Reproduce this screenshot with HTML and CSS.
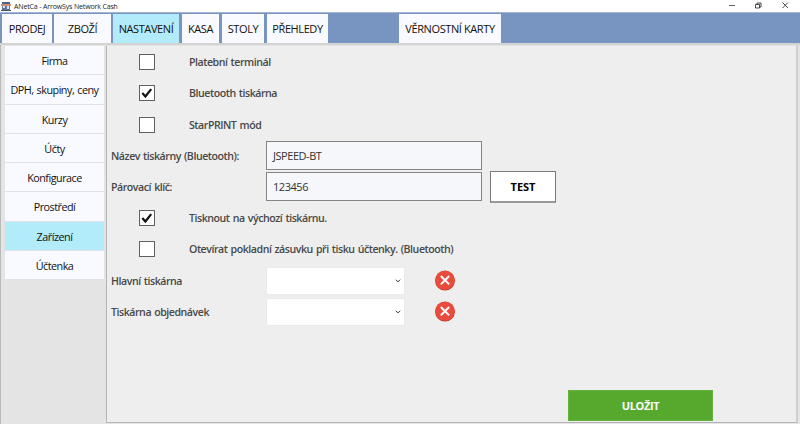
FILE: index.html
```html
<!DOCTYPE html>
<html lang="cs">
<head>
<meta charset="utf-8">
<title>ANetCa - ArrowSys Network Cash</title>
<link rel="stylesheet" href="styles.css">
</head>
<body>
<header class="titlebar">
  <svg class="app-icon" width="10" height="10" viewBox="0 0 10 10"><path fill="#4a6490" d="M1 1h8v2H1z"/><path fill="#d98a78" d="M0 3h10v2H0z"/><path fill="#5c7594" d="M1 5h8v4H1z"/><path fill="#d9e7f4" d="M2 5h2v2H2zM6 5h2v3H6z"/><path fill="#4a5262" d="M0 9h10v1H0z"/></svg>
  <span class="title">ANetCa - ArrowSys Network Cash</span>
  <svg class="window-controls" width="64" height="10" viewBox="0 0 64 10" fill="none" stroke="#333"><path stroke="#666" d="M2 4.500h6"/><path stroke-width=".9" d="M28.500 3.500h4v3.500h-4zM30 3.500v-1.500h4v4h-1.500"/><path stroke-width=".9" d="M55.500 1.500l5.500 5.500M61 1.500l-5.500 5.500"/></svg>
</header>
<nav class="tabs">
  <a class="tab prodej"><span>PRODEJ</span></a>
  <a class="tab zbozi"><span>ZBOŽÍ</span></a>
  <a class="tab nastaveni active"><span>NASTAVENÍ</span></a>
  <a class="tab kasa"><span>KASA</span></a>
  <a class="tab stoly"><span>STOLY</span></a>
  <a class="tab prehledy"><span>PŘEHLEDY</span></a>
  <a class="tab karty"><span>VĚRNOSTNÍ KARTY</span></a>
</nav>
<div class="workspace">
  <aside class="sidebar">
    <a class="item">Firma</a>
    <a class="item">DPH, skupiny, ceny</a>
    <a class="item">Kurzy</a>
    <a class="item">Účty</a>
    <a class="item">Konfigurace</a>
    <a class="item">Prostředí</a>
    <a class="item active">Zařízení</a>
    <a class="item">Účtenka</a>
  </aside>
  <main class="panel">
    <div class="row check"><span class="box"></span><span class="label">Platební terminál</span></div>
    <div class="row check"><span class="box"><svg width="15" height="14" viewBox="0 0 15 14"><path d="M2.500 7L5.800 10.700L12 2.900"/></svg></span><span class="label">Bluetooth tiskárna</span></div>
    <div class="row check"><span class="box"></span><span class="label">StarPRINT mód</span></div>
    <div class="row"><span class="label name">Název tiskárny (Bluetooth):</span><span class="field">JSPEED-BT</span></div>
    <div class="row"><span class="label name">Párovací klíč:</span><span class="field">123456</span><span class="test">TEST</span></div>
    <div class="row check"><span class="box"><svg width="15" height="14" viewBox="0 0 15 14"><path d="M2.500 7L5.800 10.700L12 2.900"/></svg></span><span class="label">Tisknout na výchozí tiskárnu.</span></div>
    <div class="row check"><span class="box"></span><span class="label">Otevírat pokladní zásuvku při tisku účtenky. (Bluetooth)</span></div>
    <div class="row"><span class="label name">Hlavní tiskárna</span><span class="select"><svg width="6" height="4" viewBox="0 0 6 4"><path d="M.8.7L3 2.900L5.200.7"/></svg></span><svg class="remove" width="20" height="21" viewBox="0 0 20 21"><circle cx="10" cy="10.700" r="9.900" fill="#c9392b"/><circle cx="10" cy="10.100" r="9.700" fill="#e94b3c"/><path d="M5.800 6l8.400 8.400M14.200 6l-8.400 8.400"/></svg></div>
    <div class="row"><span class="label name">Tiskárna objednávek</span><span class="select"><svg width="6" height="4" viewBox="0 0 6 4"><path d="M.8.7L3 2.900L5.200.7"/></svg></span><svg class="remove" width="20" height="21" viewBox="0 0 20 21"><circle cx="10" cy="10.700" r="9.900" fill="#c9392b"/><circle cx="10" cy="10.100" r="9.700" fill="#e94b3c"/><path d="M5.800 6l8.400 8.400M14.200 6l-8.400 8.400"/></svg></div>
    <div class="save">ULOŽIT</div>
  </main>
</div>
</body>
</html>
```
FILE: styles.css
```css
* { box-sizing: border-box; }
body {
  margin: 0;
  width: 800px;
  height: 424px;
  overflow: hidden;
  display: flex;
  flex-direction: column;
  background: #fff;
  font-family: "Open Sans", "Noto Sans", sans-serif;
  font-size: 11px;
  color: #111;
  white-space: nowrap;
}
.titlebar {
  height: 12px;
  display: flex;
  align-items: center;
  padding: 0 10px 0 1px;
}
.app-icon { flex: none; margin-right: 3px; }
.title { font-size: 7px; line-height: 11px; color: #222; letter-spacing: -.15px; }
.window-controls { margin-left: auto; margin-right: -1px; }
.tabs {
  flex: none;
  height: 31px;
  padding: 1px 0 0 2px;
  display: flex;
  background: #7894c0;
  border-top: 1px solid #a4b6d2;
}
.tab {
  flex: none;
  height: 29px;
  display: flex;
  align-items: center;
  justify-content: center;
  background: #f9faff;
  margin-right: 3px;
  letter-spacing: -.4px;
}
.tab.active, .item.active { background: #b2ebf9; }
.prodej { width: 50px; margin-right: 2px; }
.zbozi { width: 57px; margin-right: 2px; }
.nastaveni { width: 66px; }
.kasa { width: 37px; }
.stoly { width: 42px; }
.prehledy { width: 61px; margin-right: 71px; }
.karty { width: 102px; }
.workspace {
  flex: 1;
  display: flex;
  border-top: 2px solid #d3d3d3;
  background: #e4e4e4;
}
.sidebar {
  width: 106px;
  padding: 1px 2px 0 4px;
  border-left: 1px solid #b9b9b9;
}
.item {
  height: 29.25px;
  padding-top: 1px;
  display: flex;
  align-items: center;
  justify-content: center;
  background: #f9faff;
  border-bottom: 1px solid #e1e2e6;
  letter-spacing: -.5px;
  word-spacing: .7px;
  font-size: 10.8px;
}
.panel {
  width: 692px;
  height: 378px;
  display: flex;
  flex-direction: column;
  padding: .6px 0 0 4px;
  background: #eee;
  border: 1px solid #b5b5b5;
  border-top-color: #e4e4e4;
  border-right: 2px solid #cfcfcf;
}
.row {
  flex: none;
  height: 31.2px;
  display: flex;
  align-items: center;
}
.label { font-size: 10.6px; font-weight: 600; color: #484848; letter-spacing: -.46px; word-spacing: .8px; }
.check { padding-left: 28px; }
.box {
  width: 16px;
  height: 16px;
  margin-right: 34px;
  border: 1px solid #606060;
  background: #fff;
  display: flex;
}
.box path { fill: none; stroke: #111; stroke-width: 2.4; }
.name { width: 155px; }
.field {
  width: 216px;
  height: 29px;
  padding-left: 6px;
  border: 1px solid #858585;
  background: #f6f7fb;
  color: #333;
  line-height: 27px;
  letter-spacing: -.45px;
}
.test {
  width: 66px;
  height: 32px;
  margin-left: 8px;
  border: 1px solid #7b7b7b;
  border-bottom: 2px solid #999;
  background: #fff;
  color: #000;
  font-weight: 700;
  line-height: 30px;
  text-align: center;
}
.select {
  width: 139px;
  height: 28px;
  display: flex;
  align-items: center;
  justify-content: flex-end;
  padding-right: 3px;
  background: #fff;
  border: 1px solid #e6ebef;
}
.select path { fill: none; stroke: #333; stroke-width: 1; }
.remove { margin-left: 30px; }
.remove path { stroke: #fff; stroke-width: 2; }
.save {
  flex: none;
  width: 145px;
  height: 31px;
  margin: auto 0 1px 457px;
  background: #56a92d;
  border: 1px solid #63b33d;
  color: #fff;
  font-weight: 700;
  line-height: 30px;
  letter-spacing: -.4px;
  text-align: center;
}
```
